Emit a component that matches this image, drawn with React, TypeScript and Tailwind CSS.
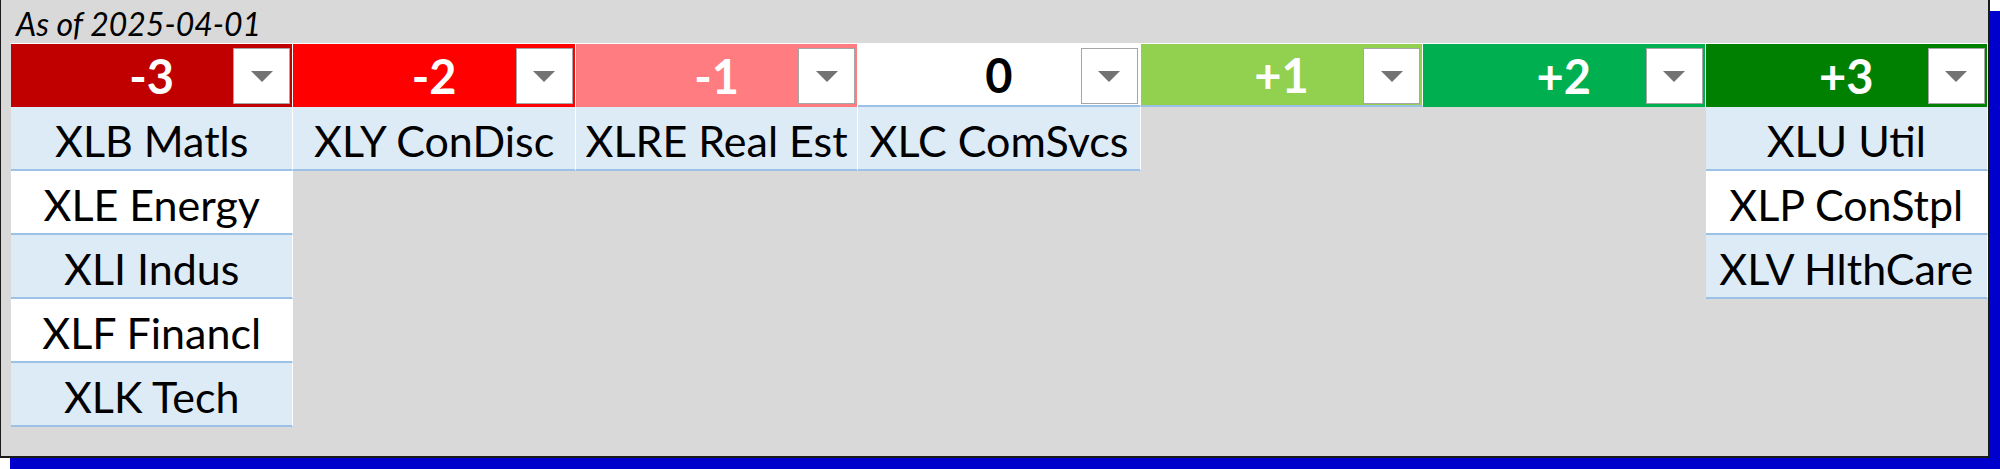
type Column = {
  label: string;
  headerClass: string;
  items: string[];
};

const columns: Column[] = [
  {
    label: "-3",
    headerClass: "bg-[#C00000] text-white",
    items: ["XLB Matls", "XLE Energy", "XLI Indus", "XLF Financl", "XLK Tech"],
  },
  { label: "-2", headerClass: "bg-[#FF0000] text-white", items: ["XLY ConDisc"] },
  { label: "-1", headerClass: "bg-[#FF7C80] text-white", items: ["XLRE Real Est"] },
  { label: "0", headerClass: "bg-white text-black border-b-2 border-b-[#9BC2E6]", items: ["XLC ComSvcs"] },
  { label: "+1", headerClass: "bg-[#92D050] text-white border-b-2 border-b-[#9BC2E6]", items: [] },
  { label: "+2", headerClass: "bg-[#00B050] text-white", items: [] },
  { label: "+3", headerClass: "bg-[#008000] text-white", items: ["XLU Util", "XLP ConStpl", "XLV HlthCare"] },
];

function FilterButton() {
  return (
    <div className="absolute right-[2px] top-[4px] flex h-[56px] w-[57px] items-center justify-center border border-[#A6A6A6] bg-white">
      <svg width="22" height="11" viewBox="0 0 22 11">
        <polygon points="0,0 22,0 11,11" fill="#737373" />
      </svg>
    </div>
  );
}

function SectorColumn({ col }: { col: Column }) {
  return (
    <div className="flex flex-col">
      <div
        className={`relative flex h-[64px] items-center justify-center border-r border-t border-white text-[47px] font-bold leading-none ${col.headerClass}`}
      >
        <span className="pt-[2px]">{col.label}</span>
        <FilterButton />
      </div>
      {col.items.map((item, i) => (
        <div
          key={item}
          className={`flex h-[64px] items-center justify-center whitespace-nowrap border-b-2 border-r border-b-[#9BC2E6] border-r-white pt-[5px] text-[43px] leading-none text-black ${
            i % 2 === 0 ? "bg-[#DDEBF7]" : "bg-white"
          }`}
        >
          {item}
        </div>
      ))}
    </div>
  );
}

export default function App() {
  return (
    <div className="h-[469px] w-[2000px] overflow-hidden bg-white font-['Lato',sans-serif]">
      <div className="h-[458px] w-[1990px] border-b-2 border-l border-r-2 border-[#1a1a1a] bg-[#D9D9D9] pl-[10px] shadow-[10px_11px_0_0_#0000CC]">
        <div className="flex h-[43px] items-end pb-[3px] pl-[5px] text-[32px] italic leading-none text-black">
          As of 2025-04-01
        </div>
        <div className="grid w-[1977px] grid-cols-7">
          {columns.map((col) => (
            <SectorColumn key={col.label} col={col} />
          ))}
        </div>
      </div>
    </div>
  );
}
